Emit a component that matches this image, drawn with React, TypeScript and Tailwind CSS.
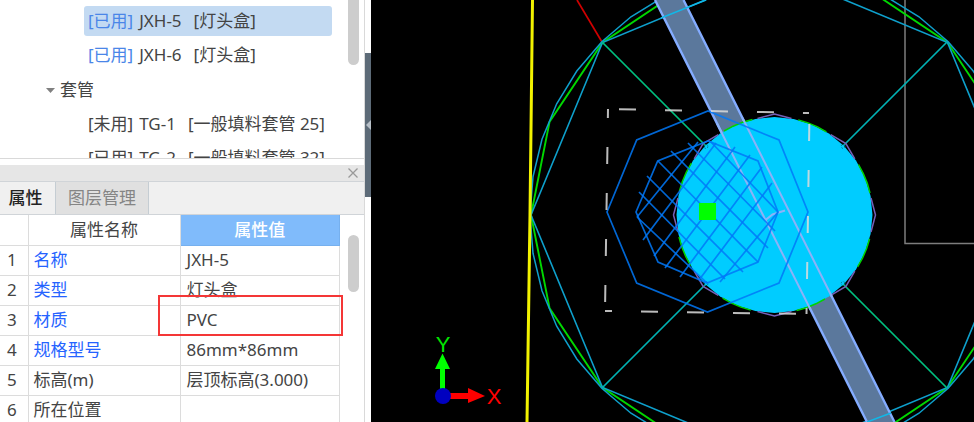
import React, { useState } from "react";

interface TreeItem {
  status: string;
  name: string;
  kind: string;
  used: boolean;
}

interface PropertyRow {
  name: string;
  value: string;
  linked: boolean;
}

const boxes: TreeItem[] = [
  { status: "[已用]", name: "JXH-5", kind: "[灯头盒]", used: true },
  { status: "[已用]", name: "JXH-6", kind: "[灯头盒]", used: true },
];

const sleeves: TreeItem[] = [
  { status: "[未用]", name: "TG-1", kind: "[一般填料套管 25]", used: false },
  { status: "[已用]", name: "TG-2", kind: "[一般填料套管 32]", used: false },
];

const properties: PropertyRow[] = [
  { name: "名称", value: "JXH-5", linked: true },
  { name: "类型", value: "灯头盒", linked: true },
  { name: "材质", value: "PVC", linked: true },
  { name: "规格型号", value: "86mm*86mm", linked: true },
  { name: "标高(m)", value: "层顶标高(3.000)", linked: false },
  { name: "所在位置", value: "", linked: false },
];

const polar = (cx: number, cy: number, r: number, deg: number) => {
  const a = (deg * Math.PI) / 180;
  return `${(cx + r * Math.cos(a)).toFixed(1)},${(cy + r * Math.sin(a)).toFixed(1)}`;
};

const ring = (cx: number, cy: number, r: number, sides: number) =>
  Array.from({ length: sides }, (_, i) => polar(cx, cy, r, (360 / sides) * i)).join(" ");

const corners = [0, 45, 90, 135, 180, 225, 270, 315];

interface TreeButtonProps {
  item: TreeItem;
  selected: boolean;
  onSelect: () => void;
}
const TreeButton: React.FC<TreeButtonProps> = ({ item, selected, onSelect }) => {
  return (
    <li className="ml-21 mr-4">
      <button
        type="button"
        onClick={onSelect}
        className={`flex h-[30px] w-full items-center rounded-[3px] pl-1 text-left whitespace-nowrap ${
          selected ? "bg-[#c3daf2]" : ""
        }`}
      >
        <span className={item.used ? "text-[#4a86e8]" : ""}>{item.status}</span>
        <span className="ml-1.5">{item.name}</span>
        <span className="ml-3">{item.kind}</span>
      </button>
    </li>
  );
};

const ComponentTree: React.FC = () => {
  const [selected, setSelected] = useState("JXH-5");
  const renderItem = (item: TreeItem) => (
    <TreeButton
      key={item.name}
      item={item}
      selected={selected === item.name}
      onSelect={() => setSelected(item.name)}
    />
  );

  return (
    <div className="flex h-[159px] shrink-0 overflow-hidden border-b border-[#d9d9d9]">
      <ul className="flex flex-1 flex-col gap-1 pt-1.5">
        {boxes.map(renderItem)}
        <li className="flex h-[31px] shrink-0 items-center gap-1 pl-[45px]">
          <svg className="h-3 w-[11px]" viewBox="0 0 11 12" fill="#808080">
            <path d="M1 4h9L5.5 9z" />
          </svg>
          <span>套管</span>
        </li>
        {sleeves.map(renderItem)}
      </ul>
      <div className="w-4">
        <div className="h-[65px] w-[11px] rounded-b-full bg-[#cdcdcd]" />
      </div>
    </div>
  );
};

const PropertyPanel: React.FC = () => {
  return (
    <section className="mt-1.5 flex flex-1 flex-col">
      <div className="flex h-4 items-center justify-end bg-[#e6e6e6] pr-1.5">
        <button type="button" aria-label="关闭">
          <svg className="size-2.5" viewBox="0 0 10 10" stroke="#999" strokeWidth="1.3">
            <path d="M.5.5l9 9M9.5.5l-9 9" />
          </svg>
        </button>
      </div>
      <div role="tablist" className="flex h-[34px] border-y border-[#d0d4d8] bg-[#f0f0f0]">
        <button type="button" role="tab" aria-selected="true" className="w-14 border-r border-[#c5cdd3] pr-1 font-medium text-[#222]">
          属性
        </button>
        <button type="button" role="tab" aria-selected="false" className="w-[93px] border-r border-[#c5cdd3] bg-[#e0e0e0] text-[#858585]">
          图层管理
        </button>
      </div>

      <div className="flex">
        <div className="relative flex-1">
          <table className="w-full table-fixed border-collapse">
            <colgroup>
              <col className="w-7" />
              <col className="w-[152px]" />
              <col />
            </colgroup>
            <thead>
              <tr className="h-[30px]">
                <th className="border-r border-b border-[#dcdcdc]" />
                <th className="border-r border-b border-[#dcdcdc] p-0 font-normal">属性名称</th>
                <th className="border-r border-b border-[#76b0ee] bg-[#80bbfb] p-0 font-medium text-white">属性值</th>
              </tr>
            </thead>
            <tbody>
              {properties.map((row, i) => (
                <tr key={row.name} className="h-[30px]">
                  <td className="border-r border-b border-[#dcdcdc] p-0 pr-1 text-center">{i + 1}</td>
                  <td className={`border-r border-b border-[#dcdcdc] p-0 pl-[5px] ${row.linked ? "text-[#2563ff]" : ""}`}>
                    {row.name}
                  </td>
                  <td className="border-r border-b border-[#dcdcdc] p-0 pl-1.5">{row.value}</td>
                </tr>
              ))}
            </tbody>
          </table>
          {/* Highlight frame over the material row */}
          <div className="pointer-events-none absolute top-20 -right-[3px] h-[41px] w-[185px] border-2 border-[#f43636]" />
        </div>
        <div className="w-6 pt-5 pl-2">
          <div className="h-[57px] w-[11px] rounded-full bg-[#cdcdcd]" />
        </div>
      </div>
    </section>
  );
};

const AxisMarker: React.FC = () => {
  return (
    <g fontFamily="'Liberation Sans', sans-serif" fontSize="22" textAnchor="middle">
      <path d="M440 394V369h-5l7.500-15.500L450 369h-5v25z" fill="#00ff00" />
      <path d="M446 393h22v-5l17 8-17 7v-4h-22z" fill="#ff0000" />
      <circle cx="443" cy="396" r="8" fill="#0000c0" />
      <text x="443" y="352" fill="#00e600">Y</text>
      <text x="494" y="404" fill="#ff0000">X</text>
    </g>
  );
};

const Drawing: React.FC = () => {
  return (
    <svg
      className="h-full w-full bg-black"
      viewBox="371 0 603 422"
      preserveAspectRatio="xMinYMin slice"
      fill="none"
      role="img"
      aria-label="灯头盒"
    >
      <path d="M905 0v243.500h69" stroke="#7d7d7d" strokeWidth="1.500" />
      <path d="M577 0l25 42" stroke="#d00000" strokeWidth="1.700" />

      {/* Outer rings */}
      <polygon points={ring(775, 215, 244, 16)} stroke="#00d800" strokeWidth="1.900" />
      <polygon points={ring(775, 215, 245, 40)} stroke="#0ea0cc" strokeWidth="1.500" />
      <polygon points={ring(775, 215, 244, 8)} stroke="#0ea0cc" strokeWidth="1.600" />
      <path d="M602 42l104 104M843 284l104 104" stroke="#00c080" strokeWidth="1.700" />
      <path d="M947 42L842 147M602 388l104-104" stroke="#00b2b4" strokeWidth="1.700" />
      <path d="M532.500 0L530 215l-3 207" stroke="#f2f200" strokeWidth="3" />

      {/* Conduit under the lamp body */}
      <path d="M655 0h28.500L894.500 422H867z" fill="#5b789c" />
      <path d="M655 0l212 422M683.500 0l211 422" stroke="#84acff" strokeWidth="2.400" />
      <path d="M661 18l45-18M867 422l24-9" stroke="#10b8e8" strokeWidth="1.500" />

      {/* Lamp body */}
      <polygon points={ring(774.5, 215, 98, 32)} fill="#00ccff" />
      {corners.map((a) => (
        <g key={a}>
          <polyline
            points={[14, 20, 26, 32].map((d) => polar(774.5, 215, 98, a + d)).join(" ")}
            stroke="#00d400"
            strokeWidth="1.500"
          />
          <polyline
            points={`${polar(774.5, 215, 98, a - 10)} ${polar(774.5, 215, 101, a)} ${polar(774.5, 215, 98, a + 10)}`}
            stroke="#7560b8"
            strokeWidth="1.500"
          />
        </g>
      ))}
      {[45, 135, 225, 315].map((a) => {
        const [x, y] = polar(774.5, 215, 97, a).split(",");
        return <circle key={a} cx={x} cy={y} r="2" stroke="#007a8c" strokeDasharray="1.500 1.500" />;
      })}
      <path
        d="M717 123.500L765.500 220l7-5.500 12.500-4M765.500 220l45 89.500M742.500 118L832 297"
        stroke="#8cb2f8"
        strokeWidth="2"
      />

      {/* Junction box and its hatch */}
      <g stroke="#0078f8" strokeOpacity=".85" strokeWidth="1.700">
        <path d="M607 212l29.700-72L708 111l71 29 29 72-29 71-71.500 29-70.800-29z" />
        <path d="M636 212l21.700-51 50.300-20 50 20 20 51-20 50-51 21-49-21z" />
        <path d="M637 217l70 66M639 192l86 87M647 176l96 96M658 161l100 101M671 151l97 97M688 143l87 88M710 141l68 71" />
        <path d="M637 217l61-75M643 240l73-97M654 256l81-109M665 268l85-113M680 277l82-110M699 280l73-97M720 282l58-70" />
      </g>
      <path d="M699 203h17v17h-17z" fill="#00ff00" />

      {/* Selection bounds */}
      <g stroke="#dcdcdc" strokeOpacity=".85" strokeWidth="2" strokeDasharray="17 29">
        <path d="M608 109l201 4" strokeDashoffset="35" />
        <path d="M608 109l-3 202" strokeDashoffset="8" />
        <path d="M809.500 113l-3 201" strokeDashoffset="35" />
        <path d="M605 311l201 3" strokeDashoffset="10" />
      </g>

      <AxisMarker />
    </svg>
  );
};

const App: React.FC = () => {
  return (
    <div className="flex h-screen overflow-hidden bg-white font-['Noto_Sans','Noto_Sans_CJK_SC',sans-serif] text-[17px] leading-6 text-[#444]">
      <aside className="flex w-[365px] shrink-0 flex-col overflow-hidden border-r border-[#d9d9d9]">
        <ComponentTree />
        <PropertyPanel />
      </aside>
      <div className="w-1.5 shrink-0 pt-[53px]">
        <button type="button" aria-label="收起" className="flex h-[144px] w-full items-center justify-end bg-[#5d6b78]">
          <svg className="h-2.5 w-[5px]" viewBox="0 0 5 10" fill="#b8c0c8">
            <path d="M5 0v10L0 5z" />
          </svg>
        </button>
      </div>
      <main className="min-w-0 flex-1">
        <Drawing />
      </main>
    </div>
  );
};

export default App;
